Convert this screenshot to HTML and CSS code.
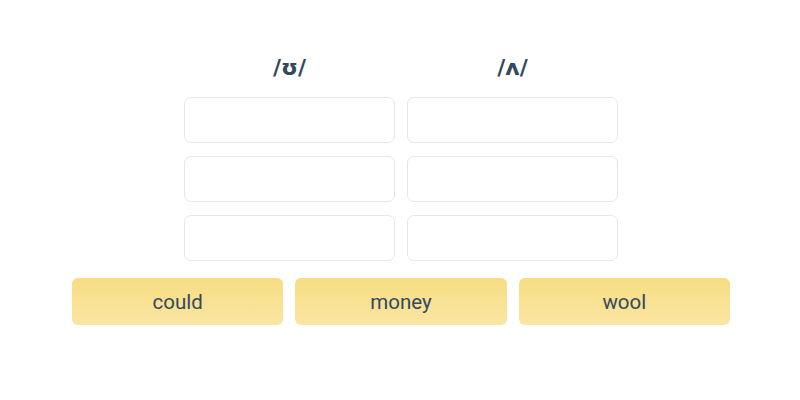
FILE: index.html
```html
<!DOCTYPE html>
<html>
<head>
    <title>Sort the words</title>
    <meta name="viewport" content="width=device-width, initial-scale=1">
    <link rel="stylesheet" href="styles.css">
</head>
<body>
    <div class="container">
        <div class="board">
            <div class="column">
                <h2 class="sound">/ʊ/</h2>
                <div class="slot"></div>
                <div class="slot"></div>
                <div class="slot"></div>
            </div>
            <div class="column">
                <h2 class="sound">/ʌ/</h2>
                <div class="slot"></div>
                <div class="slot"></div>
                <div class="slot"></div>
            </div>
        </div>
        <div class="words">
            <button type="button" class="word">could</button>
            <button type="button" class="word">money</button>
            <button type="button" class="word">wool</button>
        </div>
    </div>
</body>
</html>
```

FILE: styles.css
```css
body {
    font-family: Roboto, "Liberation Sans", sans-serif;
    margin: 0;
    background: #fff;
    color: #34495e;
}
.container {
    display: flex;
    flex-direction: column;
    align-items: center;
    padding-top: 53px;
    padding-left: 2px;
}
.board {
    display: grid;
    grid-template-columns: 211px 211px;
    column-gap: 12px;
}
.column {
    display: flex;
    flex-direction: column;
    gap: 13px;
}
.sound {
    margin: 0 0 1px;
    font-family: "DejaVu Sans", Roboto, sans-serif;
    font-size: 22px;
    line-height: 30px;
    font-weight: 700;
    text-align: center;
    color: #34495e;
}
.slot {
    height: 44px;
    border: 1px solid #e2e8ee;
    border-radius: 7px;
    background: #fff;
}
.words {
    display: grid;
    grid-template-columns: repeat(3, 1fr);
    column-gap: 12px;
    width: 658px;
    margin-top: 17px;
}
.word {
    height: 47px;
    border: none;
    border-radius: 6px;
    background: linear-gradient(#f7dd82, #f9e6a2);
    font-family: Roboto, "Liberation Sans", sans-serif;
    font-size: 20.5px;
    color: #34495e;
    cursor: pointer;
}
```
